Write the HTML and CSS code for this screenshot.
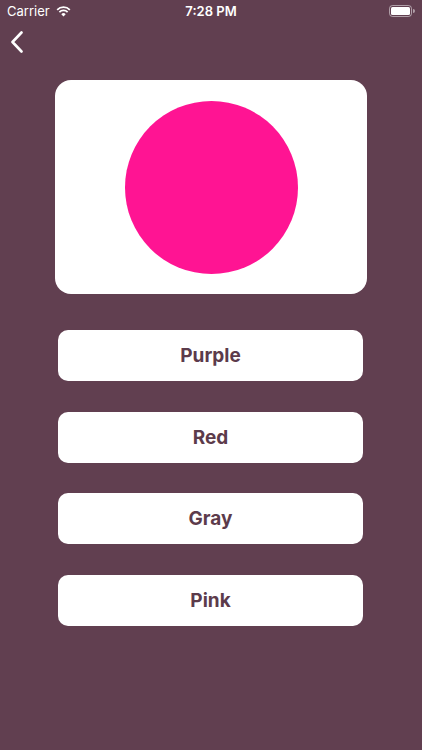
FILE: index.html
```html
<!DOCTYPE html>
<html>
<head>
<meta charset="utf-8">
<link rel="stylesheet" href="styles.css">
</head>
<body>
<div class="screen">
  <div class="status">
    <div class="status-left">
      <span class="carrier">Carrier</span>
      <svg class="wifi" width="15" height="11" viewBox="0 0 16 12">
        <path d="M8 11.5 L5.6 8.9 A3.4 3.4 0 0 1 10.4 8.9 Z" fill="#fff"/>
        <path d="M3.5 6.7 A6.4 6.4 0 0 1 12.5 6.7" stroke="#fff" stroke-width="1.9" fill="none"/>
        <path d="M1.1 4.1 A9.8 9.8 0 0 1 14.9 4.1" stroke="#fff" stroke-width="1.9" fill="none"/>
      </svg>
    </div>
    <div class="time">7:28 PM</div>
    <div class="status-right">
      <svg width="26" height="12" viewBox="0 0 26 12">
        <rect x="0.5" y="0.5" width="22" height="11" rx="3" fill="none" stroke="#fff" stroke-opacity="0.5"/>
        <rect x="2" y="2" width="19" height="8" rx="1.5" fill="#fff"/>
        <path d="M24 4 v4 a2 2 0 0 0 0 -4z" fill="#fff" fill-opacity="0.5"/>
      </svg>
    </div>
  </div>
  <div class="nav">
    <svg class="back" width="14" height="22" viewBox="0 0 14 22">
      <path d="M11.5 1.5 L2.5 11 L11.5 20.5" stroke="#fff" stroke-width="2.6" fill="none" stroke-linecap="round" stroke-linejoin="round"/>
    </svg>
  </div>
  <div class="card">
    <div class="dot"></div>
  </div>
  <div class="options">
    <div class="option">Purple</div>
    <div class="option">Red</div>
    <div class="option">Gray</div>
    <div class="option">Pink</div>
  </div>
</div>
</body>
</html>
```
FILE: styles.css
```css
html, body {
  margin: 0;
  padding: 0;
}
body {
  background: #613f50;
  font-family: "Inter", "Liberation Sans", sans-serif;
}
.screen {
  width: 422px;
  height: 750px;
  background: #613f50;
  display: flex;
  flex-direction: column;
}
.status {
  height: 22px;
  display: flex;
  align-items: center;
  justify-content: space-between;
  padding: 0 7px;
  color: #fff;
  position: relative;
  font-size: 13px;
}
.status-left {
  display: flex;
  align-items: center;
  gap: 6px;
}
.carrier {
  font-weight: 400;
}
.time {
  position: absolute;
  left: 0;
  right: 0;
  text-align: center;
  font-weight: 600;
}
.status-right {
  display: flex;
  align-items: center;
}
.nav {
  height: 40px;
  display: flex;
  align-items: center;
  padding-left: 10px;
}
.back {
  display: block;
}
.card {
  margin: 18px 0 0 55px;
  width: 312px;
  height: 214px;
  background: #fff;
  border-radius: 16px;
  display: flex;
  align-items: center;
  justify-content: center;
}
.dot {
  width: 173px;
  height: 173px;
  border-radius: 50%;
  background: #ff1493;
}
.options {
  margin: 36px 0 0 58px;
  width: 305px;
  display: flex;
  flex-direction: column;
  gap: 30.5px;
}
.option {
  height: 51px;
  background: #fff;
  border-radius: 10px;
  display: flex;
  align-items: center;
  justify-content: center;
  color: #5c3b4b;
  font-weight: 700;
  font-size: 19px;
}
```
